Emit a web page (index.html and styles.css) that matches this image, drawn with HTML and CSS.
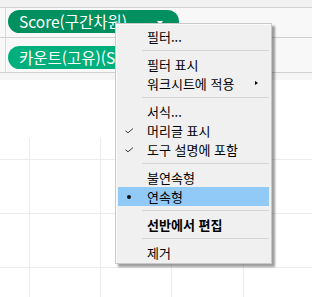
FILE: index.html
```html
<!DOCTYPE html>
<html lang="ko">
<head>
<meta charset="utf-8">
<link rel="stylesheet" href="styles.css">
</head>
<body>
<div class="page">
  <div class="topstrip"></div>
  <div class="shelf shelf-1">
    <div class="shelf-label"></div>
    <div class="shelf-body">
      <div class="pill pill-active"><span class="pill-text">Score(구간차원)</span><span class="pill-arrow"></span></div>
    </div>
  </div>
  <div class="shelf shelf-2">
    <div class="shelf-label"></div>
    <div class="shelf-body">
      <div class="pill pill-cont"><span class="pill-text">카운트(고유)(Score)</span><span class="pill-arrow"></span></div>
    </div>
  </div>
  <div class="band"></div>
  <div class="chart">
    <div class="c"></div><div class="c"></div><div class="c"></div><div class="c"></div><div class="c"></div>
    <div class="c"></div><div class="c"></div><div class="c"></div><div class="c"></div><div class="c"></div>
    <div class="c"></div><div class="c"></div><div class="c"></div><div class="c"></div><div class="c"></div>
    <div class="c"></div><div class="c"></div><div class="c"></div><div class="c"></div><div class="c"></div>
  </div>

  <div class="menu">
    <div class="mi"><span class="mi-icon"></span><span class="mi-text">필터...</span></div>
    <div class="sep"></div>
    <div class="mi"><span class="mi-icon"></span><span class="mi-text">필터 표시</span></div>
    <div class="mi"><span class="mi-icon"></span><span class="mi-text">워크시트에 적용</span><span class="sub-arrow"></span></div>
    <div class="sep"></div>
    <div class="mi"><span class="mi-icon"></span><span class="mi-text">서식...</span></div>
    <div class="mi"><span class="mi-icon"><svg width="9" height="6" viewBox="0 0 9 6"><path d="M0.5 2.8 L3 4.8 L8 0.6" fill="none" stroke="#3c3c3c" stroke-width="1"/></svg></span><span class="mi-text">머리글 표시</span></div>
    <div class="mi"><span class="mi-icon"><svg width="9" height="6" viewBox="0 0 9 6"><path d="M0.5 2.8 L3 4.8 L8 0.6" fill="none" stroke="#3c3c3c" stroke-width="1"/></svg></span><span class="mi-text">도구 설명에 포함</span></div>
    <div class="sep"></div>
    <div class="mi"><span class="mi-icon"></span><span class="mi-text">불연속형</span></div>
    <div class="mi mi-hl"><span class="mi-icon"><span class="bullet"></span></span><span class="mi-text">연속형</span></div>
    <div class="sep"></div>
    <div class="mi"><span class="mi-icon"></span><span class="mi-text mi-bold">선반에서 편집</span></div>
    <div class="sep"></div>
    <div class="mi"><span class="mi-icon"></span><span class="mi-text">제거</span></div>
  </div>
</div>
</body>
</html>
```

FILE: styles.css
```css
html, body {
  margin: 0;
  padding: 0;
  background: #ffffff;
}
.page {
  position: relative;
  width: 312px;
  height: 297px;
  overflow: hidden;
  background: #ffffff;
  font-family: "Noto Sans CJK KR", "Noto Sans", sans-serif;
}
.topstrip {
  height: 7px;
  background: #f1f1f1;
  border-bottom: 1px solid #d2d2d2;
}
.shelf {
  display: flex;
  background: #f8f8f8;
  border-bottom: 1px solid #cfcfcf;
}
.shelf-label {
  width: 5px;
  border-right: 1px solid #d9d9d9;
}
.shelf-body {
  flex: 1;
  padding-left: 2px;
}
.shelf-1 .shelf-body {
  padding-top: 2px;
  padding-bottom: 4px;
}
.shelf-2 .shelf-body {
  padding-top: 8px;
  padding-bottom: 3px;
}
.pill {
  display: flex;
  align-items: center;
  width: 171px;
  height: 23px;
  box-sizing: border-box;
  border-radius: 12px;
  padding: 0 16px 0 11px;
  color: #ffffff;
  font-family: "Noto Sans CJK KR", "Noto Sans", sans-serif;
  font-size: 15.5px;
  line-height: 23px;
  white-space: nowrap;
}
.pill-active {
  background: #008f5e;
}
.pill-cont {
  background: #00af7b;
}
.pill-text {
  flex: 1;
  overflow: hidden;
}
.pill-arrow {
  width: 0;
  height: 0;
  border-left: 3.5px solid transparent;
  border-right: 3.5px solid transparent;
  border-top: 4px solid #ffffff;
  margin-top: 2px;
}
.band {
  height: 7px;
  background: #f5f5f5;
}
.chart {
  margin-top: 58px;
  display: grid;
  grid-template-columns: 30px 71px 71px 72px 1fr;
  grid-template-rows: 22px 54px 54px 1fr;
  height: 159px;
}
.c {
  box-sizing: border-box;
  border-right: 1px solid #ececec;
  border-bottom: 1px solid #ececec;
}
.c:nth-child(5n) {
  border-right: none;
}
.c:nth-child(n+16) {
  border-bottom: none;
}

/* context menu */
.menu {
  position: absolute;
  left: 115px;
  top: 23px;
  width: 157px;
  box-sizing: border-box;
  background: #f0f0f0;
  border: 1px solid #c9c9c9;
  box-shadow: inset 1px 1px 0 #fbfbfb, 3px 3px 2px rgba(0, 0, 0, 0.38);
  padding: 3px 2px 1px 2px;
  font-family: "Noto Sans CJK KR", "Noto Sans", sans-serif;
  font-size: 13px;
  color: #000000;
}
.mi {
  display: flex;
  align-items: center;
  height: 19px;
  line-height: 19px;
  padding-right: 11px;
  white-space: nowrap;
}
.mi-hl {
  background: #91c9f7;
}
.mi-icon {
  width: 22px;
  height: 19px;
  display: flex;
  align-items: center;
  justify-content: center;
  flex-shrink: 0;
}
.mi-icon svg {
  display: block;
  margin-top: 1px;
}
.mi-text {
  flex: 1;
  margin-left: 7px;
}
.mi-bold {
  font-weight: bold;
}
.bullet {
  width: 4px;
  height: 4px;
  border-radius: 50%;
  background: #111111;
}
.sub-arrow {
  width: 0;
  height: 0;
  border-top: 2.5px solid transparent;
  border-bottom: 2.5px solid transparent;
  border-left: 3px solid #000000;
  margin-top: -2px;
}
.sep {
  height: 1px;
  margin: 4px 0 4px 24px;
  background: #d5d5d5;
}
```
